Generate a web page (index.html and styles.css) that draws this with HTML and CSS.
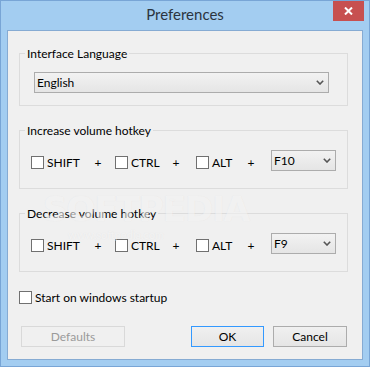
FILE: index.html
```html
<!DOCTYPE html>
<html>
<head>
<meta charset="utf-8">
<link rel="stylesheet" href="styles.css">
</head>
<body>
<div class="window">
  <div class="titlebar">
    <span class="title">Preferences</span>
    <div class="close">
      <svg width="9" height="8" viewBox="0 0 9 8"><path d="M1 0.5 L8 7.5 M8 0.5 L1 7.5" stroke="#fff" stroke-width="2" fill="none"/></svg>
    </div>
  </div>
  <div class="client">
    <div class="group g-lang">
      <span class="legend">Interface Language</span>
      <div class="select wide"><span>English</span><svg class="chev" width="8" height="5" viewBox="0 0 8 5"><path d="M0.8 0.8 L4 4 L7.2 0.8" stroke="#555" stroke-width="1.6" fill="none"/></svg></div>
    </div>
    <div class="group g-hot">
      <span class="legend">Increase volume hotkey</span>
      <div class="hk-row">
        <div class="chk c-shift"><span class="box"></span><span>SHIFT</span></div>
        <span class="plus">+</span>
        <div class="chk c-ctrl"><span class="box"></span><span>CTRL</span></div>
        <span class="plus">+</span>
        <div class="chk c-alt"><span class="box"></span><span>ALT</span></div>
        <span class="plus">+</span>
        <div class="select small"><span>F10</span><svg class="chev" width="8" height="5" viewBox="0 0 8 5"><path d="M0.8 0.8 L4 4 L7.2 0.8" stroke="#555" stroke-width="1.6" fill="none"/></svg></div>
      </div>
    </div>
    <div class="group g-hot">
      <span class="legend">Decrease volume hotkey</span>
      <div class="hk-row">
        <div class="chk c-shift"><span class="box"></span><span>SHIFT</span></div>
        <span class="plus">+</span>
        <div class="chk c-ctrl"><span class="box"></span><span>CTRL</span></div>
        <span class="plus">+</span>
        <div class="chk c-alt"><span class="box"></span><span>ALT</span></div>
        <span class="plus">+</span>
        <div class="select small"><span>F9</span><svg class="chev" width="8" height="5" viewBox="0 0 8 5"><path d="M0.8 0.8 L4 4 L7.2 0.8" stroke="#555" stroke-width="1.6" fill="none"/></svg></div>
      </div>
    </div>
    <div class="chk startup"><span class="box"></span><span>Start on windows startup</span></div>
    <div class="buttons">
      <button class="btn defaults" disabled>Defaults</button>
      <button class="btn ok">OK</button>
      <button class="btn cancel">Cancel</button>
    </div>
  </div>
  <div class="watermark">
    <span class="wm-big">SOFTPEDIA</span><span class="wm-tm">™</span>
    <span class="wm-url">www.softpedia.com</span>
  </div>
</div>
</body>
</html>
```

FILE: styles.css
```css
html, body {
  margin: 0;
  padding: 0;
  background: #a3cdf1;
}
body {
  font-family: Lato, "Noto Sans", sans-serif;
  font-size: 12px;
  color: #000;
}
.window {
  position: relative;
  box-sizing: border-box;
  width: 370px;
  height: 367px;
  border: 1px solid #78a5d6;
  background: #a3cdf1;
  padding: 0 6px 6px 6px;
  display: flex;
  flex-direction: column;
  overflow: hidden;
}
.titlebar {
  position: relative;
  height: 29px;
  margin: 0 -6px;
  padding: 0 6px;
  text-align: center;
}
.title {
  font-size: 15px;
  line-height: 27px;
  color: #2b3440;
}
.close {
  position: absolute;
  top: 0;
  right: 5px;
  width: 31px;
  height: 20px;
  background: #c75050;
  display: flex;
  align-items: center;
  justify-content: center;
}
.client {
  flex: 1;
  box-sizing: border-box;
  border: 1px solid #86abd3;
  background: #f0f0f0;
  padding: 22px 0 0 0;
}
.group {
  position: relative;
  box-sizing: border-box;
  width: 329px;
  margin-left: 11px;
  border: 1px solid #dcdcdc;
}
.g-lang {
  padding: 18px 0 12px 14px;
}
.g-hot {
  margin-top: 24px;
  padding: 19px 0 17px 11px;
}
.legend {
  position: absolute;
  top: -8px;
  left: 5px;
  padding: 0 2px;
  background: #f0f0f0;
  line-height: 15px;
}
.select {
  box-sizing: border-box;
  height: 21px;
  border: 1px solid #acacac;
  background: linear-gradient(#f2f2f2, #e5e5e5);
  display: flex;
  align-items: center;
  justify-content: space-between;
  padding: 0 4px 0 2px;
  line-height: 19px;
}
.select.wide {
  width: 295px;
}
.select.small {
  width: 65px;
  margin-left: 9px;
}
.chev {
  display: block;
}
.hk-row {
  display: flex;
  align-items: flex-start;
  height: 21px;
}
.chk {
  display: flex;
  align-items: center;
  gap: 3px;
  margin-top: 6px;
  height: 13px;
  line-height: 13px;
}
.box {
  box-sizing: border-box;
  width: 13px;
  height: 13px;
  border: 1px solid #707070;
  background: #fff;
  flex: none;
}
.c-shift { width: 56px; }
.c-ctrl { width: 50px; margin-left: 6px; }
.c-alt { width: 44px; margin-left: 9px; }
.plus {
  width: 22px;
  text-align: center;
  margin-top: 6px;
  line-height: 13px;
}
.startup {
  margin: 19px 0 0 11px;
}
.buttons {
  display: flex;
  margin-top: 22px;
  padding: 0 15px 0 13px;
}
.btn {
  box-sizing: border-box;
  height: 21px;
  padding: 0;
  font-family: Lato, "Noto Sans", sans-serif;
  font-size: 12px;
  line-height: 19px;
  color: #000;
  border: 1px solid #acacac;
  background: linear-gradient(#f0f0f0, #e5e5e5);
  border-radius: 0;
}
.defaults {
  width: 104px;
  border-color: #d9d9d9;
  background: #f0f0f0;
  color: #9a9a9a;
}
.ok {
  width: 73px;
  margin-left: auto;
  border-color: #3399ff;
}
.cancel {
  width: 74px;
  margin-left: 9px;
}
.watermark {
  position: absolute;
  left: 42px;
  top: 188px;
  pointer-events: none;
  color: rgba(255, 255, 255, 0.5);
  text-shadow: 0 0 1px rgba(170, 170, 170, 0.18);
}
.wm-big {
  font-family: "DejaVu Sans", sans-serif;
  font-weight: bold;
  font-size: 34px;
  letter-spacing: -1px;
  line-height: 40px;
}
.wm-tm {
  position: absolute;
  left: 126px;
  top: 8px;
  font-size: 8px;
}
.wm-url {
  position: absolute;
  left: 25px;
  top: 40px;
  font-size: 11px;
  white-space: nowrap;
  line-height: 12px;
}
```
